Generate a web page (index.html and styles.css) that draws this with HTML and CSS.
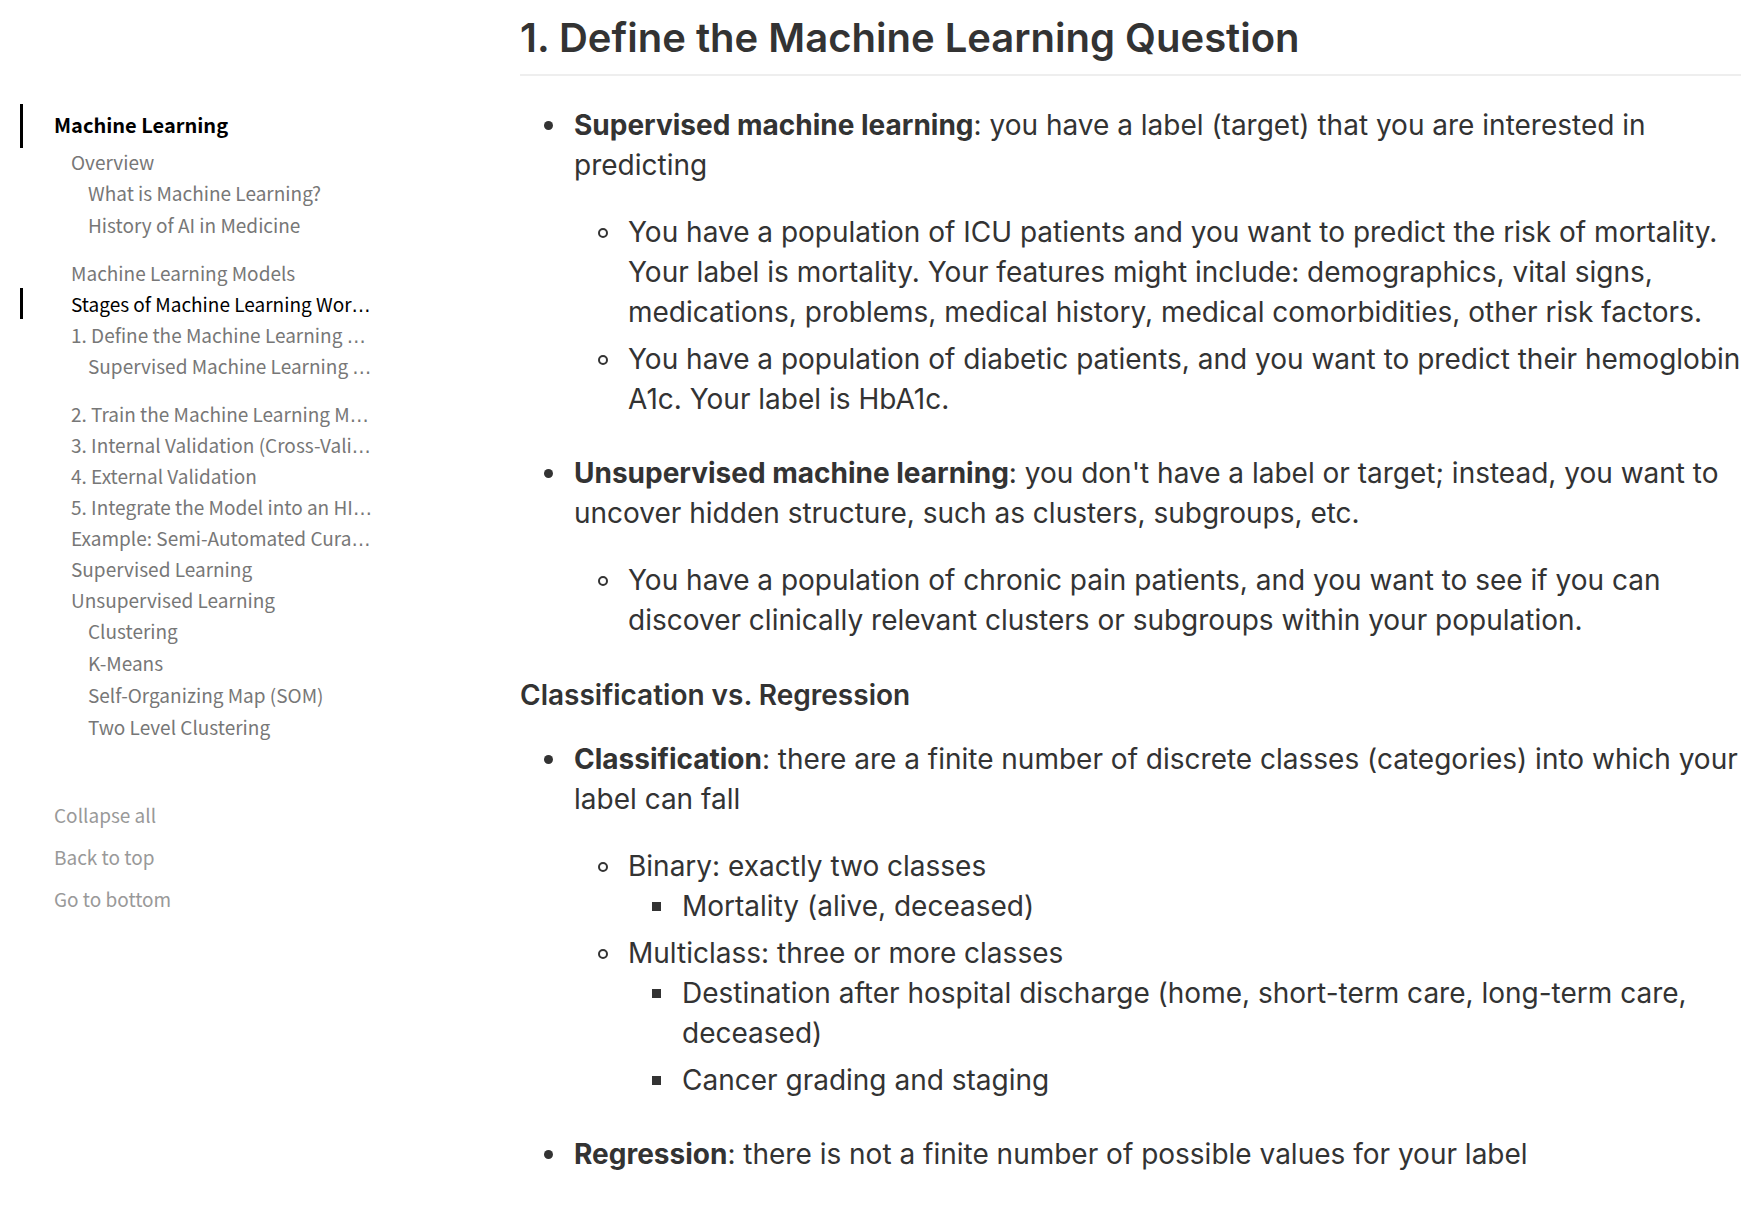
FILE: index.html
```
<!DOCTYPE html>
<html lang="en">
<head>
<meta charset="utf-8">
<title>Machine Learning</title>
<link rel="stylesheet" href="styles.css">
</head>
<body>
<div class="page">
  <nav class="toc" aria-label="Table of contents">
    <a class="toc-title" href="#top">Machine Learning</a>
    <ul class="toc-list">
      <li><a href="#overview">Overview</a>
        <ul class="toc-sublist">
          <li><a href="#what">What is Machine Learning?</a></li>
          <li><a href="#history">History of AI in Medicine</a></li>
        </ul>
      </li>
      <li><a href="#models">Machine Learning Models</a></li>
      <li><a class="is-active" href="#stages">Stages of Machine Learning Wor<span class="dots">…</span></a></li>
      <li><a href="#define">1. Define the Machine Learning <span class="dots">…</span></a>
        <ul class="toc-sublist">
          <li><a href="#supervised-ml">Supervised Machine Learning <span class="dots">…</span></a></li>
        </ul>
      </li>
      <li><a href="#train">2. Train the Machine Learning M<span class="dots">…</span></a></li>
      <li><a href="#internal">3. Internal Validation (Cross-Vali<span class="dots">…</span></a></li>
      <li><a href="#external">4. External Validation</a></li>
      <li><a href="#integrate">5. Integrate the Model into an HI<span class="dots">…</span></a></li>
      <li><a href="#example">Example: Semi-Automated Cura<span class="dots">…</span></a></li>
      <li><a href="#supervised">Supervised Learning</a></li>
      <li><a href="#unsupervised">Unsupervised Learning</a>
        <ul class="toc-sublist">
          <li><a href="#clustering">Clustering</a></li>
          <li><a href="#kmeans">K-Means</a></li>
          <li><a href="#som">Self-Organizing Map (SOM)</a></li>
          <li><a href="#two-level">Two Level Clustering</a></li>
        </ul>
      </li>
    </ul>
    <div class="toc-actions">
      <a href="#collapse">Collapse all</a>
      <a href="#top">Back to top</a>
      <a href="#bottom">Go to bottom</a>
    </div>
  </nav>
  <main class="doc">
    <h2 id="define">1. Define the Machine Learning Question</h2>
    <ul>
      <li>
        <p><strong>Supervised machine learning</strong>: you have a label (target) that you are interested in predicting</p>
        <ul class="loose">
          <li>You have a population of ICU patients and you want to predict the risk of mortality. Your label is mortality. Your features might include: demographics, vital signs, medications, problems, medical history, medical comorbidities, other risk factors.</li>
          <li>You have a population of diabetic patients, and you want to predict their hemoglobin A1c. Your label is HbA1c.</li>
        </ul>
      </li>
      <li>
        <p><strong>Unsupervised machine learning</strong>: you don't have a label or target; instead, you want to uncover hidden structure, such as clusters, subgroups, etc.</p>
        <ul class="loose">
          <li>You have a population of chronic pain patients, and you want to see if you can discover clinically relevant clusters or subgroups within your population.</li>
        </ul>
      </li>
    </ul>
    <h4 id="supervised-ml">Classification vs. Regression</h4>
    <ul>
      <li>
        <p><strong>Classification</strong>: there are a finite number of discrete classes (categories) into which your label can fall</p>
        <ul class="loose">
          <li>Binary: exactly two classes
            <ul class="nested">
              <li>Mortality (alive, deceased)</li>
            </ul>
          </li>
          <li>Multiclass: three or more classes
            <ul class="nested">
              <li>Destination after hospital discharge (home, short-term care, long-term care, deceased)</li>
              <li>Cancer grading and staging</li>
            </ul>
          </li>
        </ul>
      </li>
      <li>
        <p><strong>Regression</strong>: there is not a finite number of possible values for your label</p>
      </li>
    </ul>
  </main>
</div>
</body>
</html>
```
FILE: styles.css
```
*,
*::before {
  box-sizing: border-box;
}

body {
  margin: 0;
  background: #fff;
  color: #333;
  font-family: Inter, "Liberation Sans", sans-serif;
  font-size: 28px;
  line-height: 40px;
}

a {
  color: inherit;
  text-decoration: none;
}

.page {
  display: grid;
  grid-template-columns: 500px minmax(0, 1fr);
  column-gap: 20px;
}

/* Sidebar */
.toc {
  padding: 104px 100px 0 20px;
  color: #777;
  font-family: "Noto Sans CJK SC", "Noto Sans", sans-serif;
  font-size: 19px;
  line-height: 31px;
}

.toc a {
  display: block;
  border-left: 3px solid transparent;
  white-space: nowrap;
}

.toc ul {
  margin: 0;
  padding: 0;
  list-style: none;
}

.toc .toc-title {
  padding: 0 0 2px 31px;
  border-left-color: #000;
  color: #000;
  font-size: 20px;
  font-weight: 700;
  line-height: 42px;
}

.toc .toc-list {
  margin-top: -2px;
}

.toc-list a {
  padding-left: 48px;
}

.toc-list .is-active {
  border-left-color: #000;
  color: #000;
}

.toc .toc-sublist {
  padding-bottom: 16px;
}

.toc-sublist a {
  padding-left: 65px;
  line-height: 32px;
}

.toc-actions {
  display: grid;
  row-gap: 11px;
  padding-top: 40px;
  color: #999;
}

.toc-actions a {
  padding-left: 31px;
}

.dots {
  font-family: "DejaVu Sans", sans-serif;
  line-height: 1;
}

/* Document */
.doc h2 {
  margin: 0 5px 0 0;
  padding: 13px 0 11px;
  border-bottom: 2px solid #eee;
  font-size: 40px;
  font-weight: 600;
  line-height: 50px;
}

.doc h4 {
  margin: 8px 0 24px;
  font-size: 28px;
  font-weight: 600;
}

.doc p {
  margin: 0;
}

.doc ul {
  margin: 0;
  padding-left: 54px;
  list-style: none;
}

.doc h2 + ul {
  margin-top: 29px;
}

.doc .loose {
  padding-top: 27px;
  padding-bottom: 27px;
}

.doc li + li {
  margin-top: 7px;
}

/* List markers hang in the indent: disc, ring, square */
.doc li::before {
  content: "";
  float: left;
  width: 9px;
  height: 9px;
  margin: 16px 0 0 -30px;
  border-radius: 50%;
  background: #333;
}

.doc .loose > li::before {
  width: 10px;
  height: 10px;
  border: 2px solid #333;
  background: none;
}

.doc .nested > li::before {
  border-radius: 0;
}

.doc strong {
  font-weight: 700;
}
```
